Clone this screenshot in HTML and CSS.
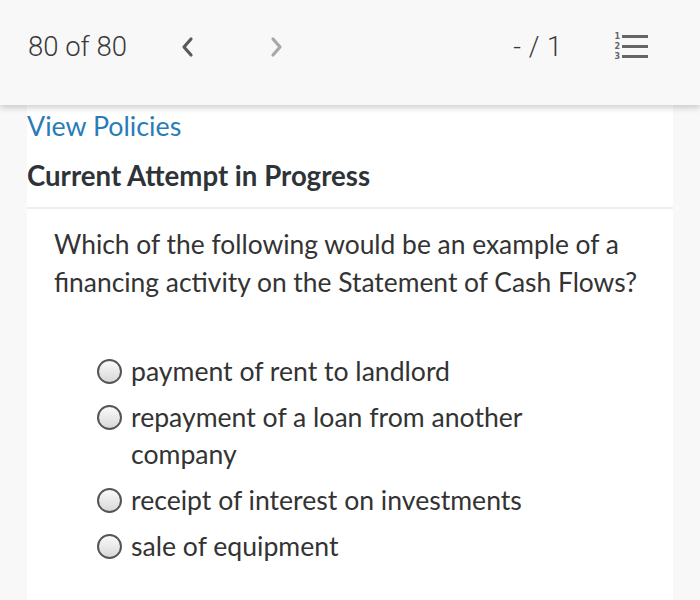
FILE: index.html
```html
<!DOCTYPE html>
<html>
<head>
<meta charset="utf-8">
<link rel="stylesheet" href="styles.css">
</head>
<body>
<header class="topbar">
  <div class="count">80 of 80</div>
  <div class="nav">
    <svg class="chev" width="14" height="22" viewBox="0 0 14 22"><path d="M11 3 L4 11 L11 19" fill="none" stroke="#5a5a5a" stroke-width="3.2" stroke-linecap="round" stroke-linejoin="round"/></svg>
    <svg class="chev next" width="14" height="22" viewBox="0 0 14 22"><path d="M3 3 L10 11 L3 19" fill="none" stroke="#a8a8a8" stroke-width="3.2" stroke-linecap="round" stroke-linejoin="round"/></svg>
  </div>
  <div class="score">- / 1</div>
  <div class="listicon">
    <div class="nums"><span>1</span><span>2</span><span>3</span></div>
    <div class="bars"><i></i><i></i><i></i></div>
  </div>
</header>
<main class="card">
  <a class="policies">View Policies</a>
  <h2 class="attempt">Current Attempt in Progress</h2>
  <div class="question">
    <p class="qtext">Which of the following would be an example of a financing activity on the Statement of Cash Flows?</p>
    <ul class="options">
      <li><span class="radio"></span><span class="otext">payment of rent to landlord</span></li>
      <li><span class="radio"></span><span class="otext">repayment of a loan from another company</span></li>
      <li><span class="radio"></span><span class="otext">receipt of interest on investments</span></li>
      <li><span class="radio"></span><span class="otext">sale of equipment</span></li>
    </ul>
  </div>
</main>
</body>
</html>
```
FILE: styles.css
```css
html, body {
  margin: 0;
  padding: 0;
  background: #f8f8f8;
  font-family: Lato, "Open Sans", sans-serif;
}
.topbar {
  position: relative;
  z-index: 2;
  height: 105px;
  background: #f8f8f8;
  box-shadow: 0 3px 6px rgba(0,0,0,0.18);
  display: flex;
  align-items: center;
  padding: 0 0 0 28px;
  box-sizing: border-box;
  padding-bottom: 12px;
}
.count {
  font-family: Roboto, "Open Sans", sans-serif;
  font-weight: 300;
  font-size: 27.5px;
  color: #3a3a3a;
  width: 152px;
}
.nav {
  display: flex;
  align-items: center;
  gap: 76px;
}
.chev { display: block; }
.score {
  font-family: Roboto, "Open Sans", sans-serif;
  font-weight: 300;
  font-size: 27px;
  color: #3a3a3a;
  margin-left: auto;
  margin-right: 52px;
  letter-spacing: 0.5px;
}
.listicon {
  display: flex;
  align-items: center;
  gap: 2px;
  margin-right: 52px;
}
.nums {
  display: flex;
  flex-direction: column;
  font-family: "DejaVu Sans", sans-serif;
  font-size: 8px;
  font-weight: bold;
  line-height: 10px;
  color: #666;
}
.bars {
  display: flex;
  flex-direction: column;
  gap: 7px;
}
.bars i {
  display: block;
  width: 26px;
  height: 3px;
  background: #666;
}
.card {
  margin: 0 27px;
  background: #fff;
  min-height: 495px;
}
.policies {
  display: block;
  font-size: 26.8px;
  line-height: 30px;
  color: #2a7cb7;
  padding-top: 6px;
}
.attempt {
  margin: 0;
  font-size: 27.6px;
  font-weight: bold;
  color: #2e3338;
  line-height: 30px;
  padding-top: 20px;
  padding-bottom: 16px;
  border-bottom: 2px solid #efefef;
}
.question {
  padding: 0 27px;
}
.qtext {
  margin: 0;
  padding-top: 16px;
  font-size: 26.4px;
  line-height: 38px;
  color: #333;
}
.options {
  list-style: none;
  margin: 0;
  padding: 52px 0 0 43px;
  max-width: 470px;
}
.options li {
  display: flex;
  align-items: flex-start;
  font-size: 26.6px;
  line-height: 37px;
  color: #333;
  margin-bottom: 9px;
}
.radio {
  flex: none;
  width: 21px;
  height: 21px;
  border: 2px solid #555;
  border-radius: 50%;
  background: linear-gradient(#fafafa, #d8d8d8);
  margin-top: 6px;
  margin-right: 9px;
}
```
